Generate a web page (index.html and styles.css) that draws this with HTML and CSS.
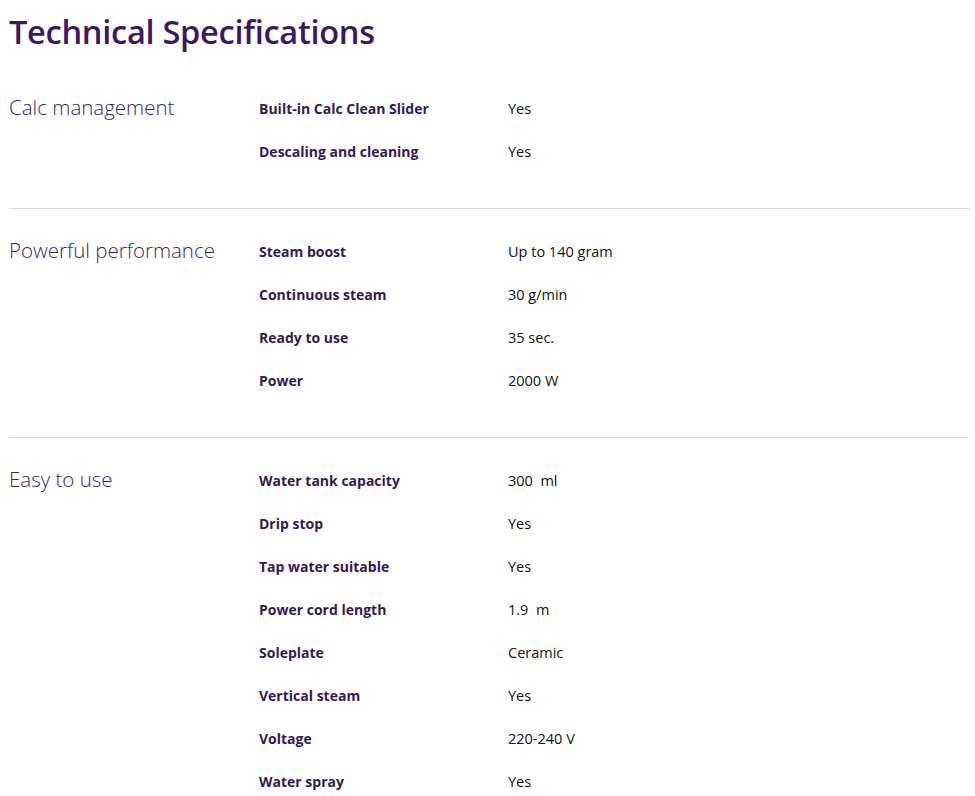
FILE: index.html
```html
<!DOCTYPE html>
<html>
<head>
<meta charset="utf-8">
<link rel="stylesheet" href="styles.css">
</head>
<body>
<div class="page">
  <h1 class="title">Technical Specifications</h1>

  <section class="group">
    <h2 class="group-name">Calc management</h2>
    <dl class="rows">
      <div class="row"><dt>Built-in Calc Clean Slider</dt><dd>Yes</dd></div>
      <div class="row"><dt>Descaling and cleaning</dt><dd>Yes</dd></div>
    </dl>
  </section>

  <section class="group">
    <h2 class="group-name">Powerful performance</h2>
    <dl class="rows">
      <div class="row"><dt>Steam boost</dt><dd>Up to 140 gram</dd></div>
      <div class="row"><dt>Continuous steam</dt><dd>30 g/min</dd></div>
      <div class="row"><dt>Ready to use</dt><dd>35 sec.</dd></div>
      <div class="row"><dt>Power</dt><dd>2000 W</dd></div>
    </dl>
  </section>

  <section class="group">
    <h2 class="group-name">Easy to use</h2>
    <dl class="rows">
      <div class="row"><dt>Water tank capacity</dt><dd>300&nbsp; ml</dd></div>
      <div class="row"><dt>Drip stop</dt><dd>Yes</dd></div>
      <div class="row"><dt>Tap water suitable</dt><dd>Yes</dd></div>
      <div class="row"><dt>Power cord length</dt><dd>1.9&nbsp; m</dd></div>
      <div class="row"><dt>Soleplate</dt><dd>Ceramic</dd></div>
      <div class="row"><dt>Vertical steam</dt><dd>Yes</dd></div>
      <div class="row"><dt>Voltage</dt><dd>220-240 V</dd></div>
      <div class="row"><dt>Water spray</dt><dd>Yes</dd></div>
    </dl>
  </section>
</div>
</body>
</html>
```
FILE: styles.css
```css
* { box-sizing: border-box; }
html, body { margin: 0; padding: 0; background: #fff; }
body {
  font-family: "Open Sans", "Noto Sans", sans-serif;
  color: #111;
}
.page {
  padding: 8px 6px 0 9px;
}
.title {
  margin: 0;
  font-size: 32.6px;
  line-height: 48px;
  font-weight: 600;
  color: #3d1764;
  letter-spacing: -0.3px;
}
.group {
  display: grid;
  grid-template-columns: 250px 1fr;
  padding: 21px 0 35px;
  border-bottom: 1px solid #d9d9d9;
}
.group:first-of-type { padding-top: 31px; }
.group:last-of-type { border-bottom: none; }
.group-name {
  margin: 0;
  font-size: 20.5px;
  line-height: 40px;
  font-weight: 300;
  color: #352a5e;
}
.rows { margin: 0; }
.row {
  display: grid;
  grid-template-columns: 249px 1fr;
  height: 43px;
  align-items: center;
}
.row dt {
  font-size: 14px;
  font-weight: 700;
  color: #341a55;
}
.row dd {
  margin: 0;
  font-size: 14.5px;
  color: #111;
}
```
